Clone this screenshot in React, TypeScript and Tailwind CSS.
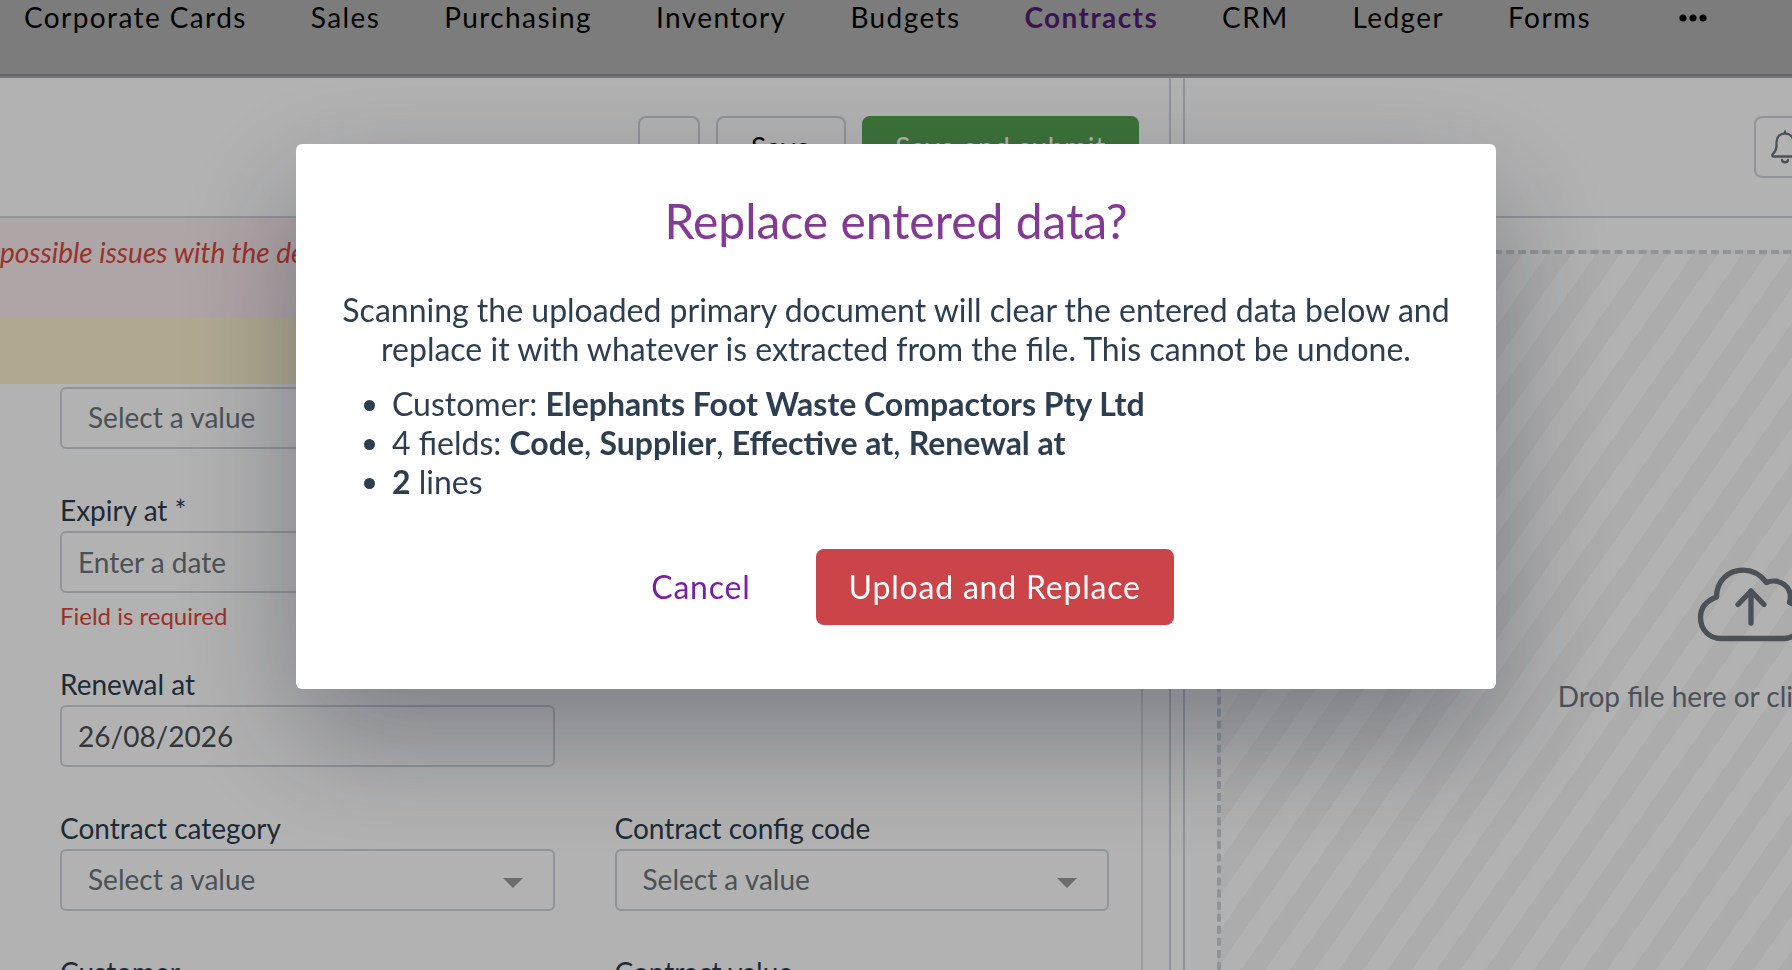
import { useId } from "react";
import type { ReactNode } from "react";

const navItems = [
  "Corporate Cards",
  "Sales",
  "Purchasing",
  "Inventory",
  "Budgets",
  "Contracts",
  "CRM",
  "Ledger",
  "Forms",
];

function NavBar() {
  return (
    <nav className="flex h-[76px] shrink-0 items-start gap-16 overflow-hidden border-b-2 border-[#8e8f95] bg-[#b2b2b2] pl-6 whitespace-nowrap tracking-wider text-black">
      {navItems.map((item) => (
        <a
          key={item}
          href="#"
          className={
            item === "Contracts"
              ? "leading-[34px] font-bold text-[#521f73]"
              : "leading-[34px]"
          }
        >
          {item}
        </a>
      ))}
      <button type="button" aria-label="More" className="ml-6 h-9">
        <svg width="28" height="8" viewBox="0 0 28 8" fill="currentColor">
          <circle cx="4" cy="4" r="3.6" />
          <circle cx="14" cy="4" r="3.6" />
          <circle cx="24" cy="4" r="3.6" />
        </svg>
      </button>
    </nav>
  );
}

function Field({
  label,
  error,
  children,
}: {
  label: string;
  error?: string;
  children: (id: string) => ReactNode;
}) {
  const id = useId();
  return (
    <div className="flex flex-col">
      <label htmlFor={id} className="pb-1 leading-[34px] text-[#2c3e50]">
        {label}
      </label>
      {children(id)}
      {error && (
        <p className="h-[30px] pt-2 text-2xl leading-[30px] text-[#dc483e]">
          {error}
        </p>
      )}
    </div>
  );
}

function SelectBox({ id, label }: { id?: string; label?: string }) {
  return (
    <div className="relative">
      <select
        id={id}
        aria-label={label}
        className="h-[62px] w-full appearance-none rounded-md border-2 border-[#ced4da] bg-white px-[26px] pb-0.5 text-[#6c757d]"
      >
        <option>Select a value</option>
      </select>
      <svg
        className="pointer-events-none absolute top-[29px] right-8"
        width="20"
        height="10"
        viewBox="0 0 20 10"
        fill="#9c9c9c"
      >
        <path d="M0 0h20L10 10z" />
      </svg>
    </div>
  );
}

const inputClass =
  "h-[62px] w-full rounded-md border-2 border-[#ced4da] bg-white px-4 text-[#495057] placeholder:text-[#6c757d]";

function ContractForm() {
  return (
    <form className="mr-[26px] grid min-h-0 flex-1 auto-rows-max grid-cols-2 gap-x-[60px] gap-y-11 overflow-hidden border-r-2 border-[#e4e4e6] pt-[3px] pr-8 pl-[60px]">
      <div className="col-start-1">
        <SelectBox label="Contract type" />
      </div>
      <div className="col-start-1">
        <Field label="Expiry at *" error="Field is required">
          {(id) => (
            <input id={id} className={inputClass} placeholder="Enter a date" />
          )}
        </Field>
      </div>
      <div className="col-start-1">
        <Field label="Renewal at">
          {(id) => (
            <input id={id} className={inputClass} defaultValue="26/08/2026" />
          )}
        </Field>
      </div>
      <div className="col-start-1">
        <Field label="Contract category">{(id) => <SelectBox id={id} />}</Field>
      </div>
      <Field label="Contract config code">{(id) => <SelectBox id={id} />}</Field>
      <Field label="Customer">{(id) => <SelectBox id={id} />}</Field>
      <Field label="Contract value">
        {(id) => <input id={id} className={inputClass} />}
      </Field>
    </form>
  );
}

function EditorPanel() {
  return (
    <section className="flex w-[1171px] shrink-0 flex-col border-r-2 border-[#ced4da]">
      <header className="flex h-[140px] shrink-0 items-start justify-end gap-4 border-b-2 border-[#ced4da] pt-[38px] pr-[30px]">
        <button
          type="button"
          aria-label="Options"
          className="size-[62px] rounded-lg border-2 border-[#ced4da]"
        />
        <button
          type="button"
          className="h-[62px] rounded-lg border-2 border-[#ced4da] px-[33px] tracking-wide text-black"
        >
          Save
        </button>
        <button
          type="button"
          className="h-[62px] rounded-lg bg-[#55a350] px-[33px] tracking-wide text-white"
        >
          Save and submit
        </button>
      </header>
      <p className="h-[100px] shrink-0 bg-[#faecee] pt-4 leading-9 text-[#dc483e] italic">
        possible issues with the details
      </p>
      <div className="h-[66px] shrink-0 bg-[#fbf3ce]" />
      <ContractForm />
    </section>
  );
}

function BellIcon() {
  return (
    <svg
      width="28"
      height="34"
      viewBox="0 0 28 34"
      fill="none"
      stroke="#6c757d"
      strokeWidth="2.300"
      strokeLinecap="round"
      strokeLinejoin="round"
    >
      <path d="M14 1.500v2M14 3.500c-5.500 0-8.500 4-8.500 9v3.500c0 4-1.500 6-3.800 8.300-.8 1-.4 2.200.8 2.200h23c1.200 0 1.600-1.200.8-2.200C24 22 22.500 20 22.500 16v-3.500c0-5-3-9-8.500-9z" />
      <path d="M11 30c.5 3 5.500 3 6 0" />
    </svg>
  );
}

function CloudUploadIcon() {
  return (
    <svg
      width="108"
      height="76"
      viewBox="0 0 108 76"
      fill="none"
      stroke="#6c757d"
      strokeWidth="5.300"
      strokeLinecap="round"
      strokeLinejoin="round"
    >
      <path d="M24 72.500C12 72.500 3.500 63.500 3.500 51.500c0-9 5.500-16.500 16-20.500C19.500 15 31 4.200 46 4.200c10 0 17 4 23.500 12.300C81 11.500 97 20 92.500 36.500c7.500 2.500 12 9 12 17.500 0 10.500-7.500 18.500-17.500 18.500z" />
      <path d="M54 57V25M41 38.500L54 25l13 13.500" />
    </svg>
  );
}

function DocumentPanel() {
  return (
    <section className="ml-3 flex min-w-[1134px] flex-1 flex-col border-l-2 border-[#ced4da]">
      <header className="flex h-[140px] shrink-0 items-start border-b-2 border-[#ced4da] pt-[38px] pl-[569px]">
        <button
          type="button"
          aria-label="Notifications"
          className="flex size-[62px] items-center justify-center rounded-lg border-2 border-[#ced4da]"
        >
          <BellIcon />
        </button>
      </header>
      <div className="flex flex-1 flex-col px-8 pt-8">
        <button
          type="button"
          className="flex flex-1 flex-col items-center gap-9 border-4 border-b-0 border-dashed border-[#ced4da] bg-[repeating-linear-gradient(125deg,#f7f7f7_0px,#f7f7f7_7px,#ffffff_7px,#ffffff_27px,#f7f7f7_27px,#f7f7f7_40px)] pt-[312px] text-[#6c757d]"
        >
          <CloudUploadIcon />
          <span className="leading-9">Drop file here or click to upload</span>
        </button>
      </div>
    </section>
  );
}

function ReplaceDialog() {
  return (
    <div className="fixed inset-0 flex items-start justify-center bg-black/30 pt-36">
      <div
        role="dialog"
        aria-modal="true"
        aria-labelledby="replace-title"
        className="w-[1200px] rounded-md bg-white px-8 pt-12 pb-16 text-[32px] leading-[39px] text-[#2c3e50] shadow-[0_48px_120px_rgba(20,24,46,0.34)]"
      >
        <h2
          id="replace-title"
          className="text-center text-5xl leading-[58px] text-[#843a94]"
        >
          Replace entered data?
        </h2>
        <p className="mt-10 text-center">
          Scanning the uploaded primary document will clear the entered data
          below and replace it with whatever is extracted from the file. This
          cannot be undone.
        </p>
        <ul className="mt-4 list-disc pl-16">
          <li>
            Customer: <b>Elephants Foot Waste Compactors Pty Ltd</b>
          </li>
          <li>
            4 fields: <b>Code</b>, <b>Supplier</b>, <b>Effective at</b>,{" "}
            <b>Renewal at</b>
          </li>
          <li>
            <b>2</b> lines
          </li>
        </ul>
        <div className="mt-12 flex justify-center gap-8">
          <button
            type="button"
            className="h-[76px] rounded-lg px-[33px] pb-0.5 tracking-wide text-[#7b1fa2]"
          >
            Cancel
          </button>
          <button
            type="button"
            className="h-[76px] rounded-lg bg-[#ca444a] px-[33px] pb-0.5 tracking-wide text-white"
          >
            Upload and Replace
          </button>
        </div>
      </div>
    </div>
  );
}

export default function App() {
  return (
    <div className="flex h-screen flex-col overflow-hidden bg-white font-['Lato',sans-serif] text-[28px]">
      <NavBar />
      <main className="flex min-h-0 flex-1 border-t-2 border-[#a9a9af]">
        <EditorPanel />
        <DocumentPanel />
      </main>
      <ReplaceDialog />
    </div>
  );
}
